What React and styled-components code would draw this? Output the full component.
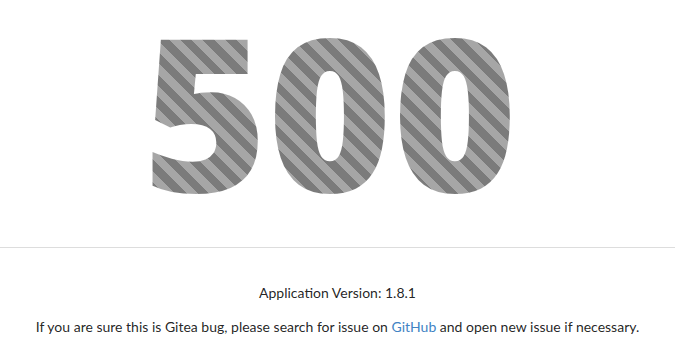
import React from 'react';
import styled, { createGlobalStyle } from 'styled-components';

const GlobalStyle = createGlobalStyle`
  body {
    margin: 0;
    background: #fff;
    font-family: Lato, "Helvetica Neue", Arial, sans-serif;
    font-size: 14px;
    line-height: 1.4285em;
    color: rgba(0, 0, 0, 0.87);
  }
`;

const Container = styled.div`
  text-align: center;
`;

// the big striped code, text clipped onto a diagonal stripe pattern
const Code = styled.div`
  height: 233px;
  display: flex;
  align-items: center;
  justify-content: center;
  font-family: "Open Sans", sans-serif;
  font-weight: 800;
  font-size: 213px;
  line-height: 1;
  padding: 0 15px 15px 0;
  box-sizing: border-box;
  background: repeating-linear-gradient(
    45deg,
    #a6a6a6 0px,
    #a6a6a6 8px,
    #7b7b7b 8px,
    #7b7b7b 16px
  );
  -webkit-background-clip: text;
  background-clip: text;
  color: transparent;
`;

const Divider = styled.div`
  margin: 14px 0;
  border-top: 1px solid rgba(34, 36, 38, 0.15);
  border-bottom: 1px solid rgba(255, 255, 255, 0.1);
`;

const Spacer = styled.div`
  height: 20px;
`;

const Text = styled.p`
  margin: 0 0 1em;
`;

const Link = styled.a`
  color: #4183c4;
  text-decoration: none;
`;

export default function App() {
  return (
    <>
      <GlobalStyle />
      <Container>
        <Code>500</Code>
        <Divider />
        <Spacer />
        <Text>Application Version: 1.8.1</Text>
        <Text>
          If you are sure this is Gitea bug, please search for issue on{' '}
          <Link href="#">GitHub</Link> and open new issue if necessary.
        </Text>
      </Container>
    </>
  );
}
